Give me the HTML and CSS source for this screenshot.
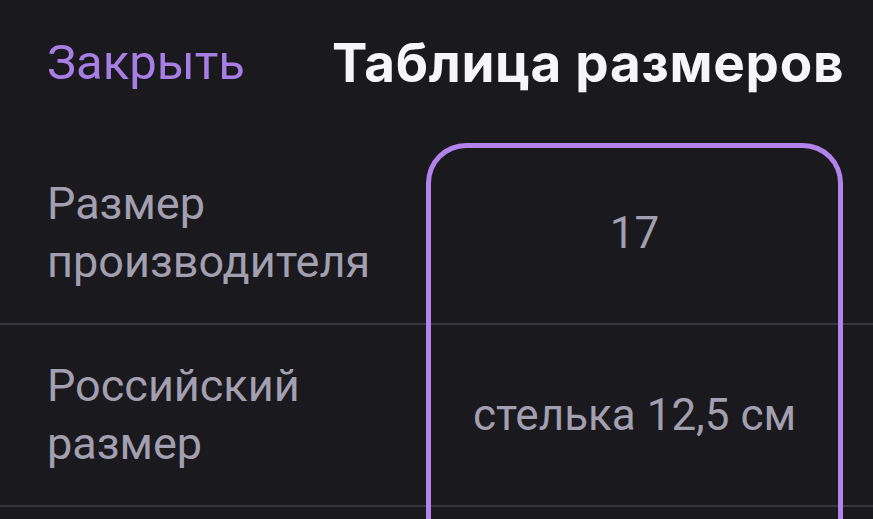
FILE: index.html
```html
<!DOCTYPE html>
<html lang="ru">
<head>
<meta charset="utf-8">
<link rel="stylesheet" href="styles.css">
</head>
<body>
<div class="screen">
  <header class="header">
    <span class="close">Закрыть</span>
    <h1 class="title">Таблица размеров</h1>
  </header>
  <div class="table">
    <div class="row">
      <div class="label">Размер<br>производителя</div>
      <div class="value">17</div>
    </div>
    <div class="row">
      <div class="label">Российский<br>размер</div>
      <div class="value">стелька 12,5 см</div>
    </div>
    <div class="frame"></div>
  </div>
</div>
</body>
</html>
```
FILE: styles.css
```css
html, body {
  margin: 0;
  padding: 0;
  background: #1a191e;
}
.screen {
  width: 873px;
  height: 519px;
  overflow: hidden;
  background: #1a191e;
  font-family: Roboto, "Liberation Sans", sans-serif;
}
.header {
  height: 143px;
  display: flex;
  align-items: center;
  padding-left: 47px;
  gap: 87px;
  box-sizing: border-box;
  padding-bottom: 18px;
}
.close {
  color: #a87ee4;
  font-size: 49px;
  font-weight: 400;
}
.title {
  margin: 0;
  color: #f6f5f8;
  font-family: Inter, "Open Sans", sans-serif;
  font-weight: 700;
  font-size: 53px;
  letter-spacing: 0.7px;
}
.table {
  position: relative;
}
.row {
  display: grid;
  grid-template-columns: 426px 417px;
  height: 180px;
  border-bottom: 2px solid #37363c;
  align-items: center;
}
.label {
  padding-left: 47px;
  color: #a29fb0;
  font-size: 45px;
  line-height: 58px;
}
.value {
  text-align: center;
  color: #a29fb0;
  font-size: 44px;
}
.frame {
  position: absolute;
  top: 0;
  left: 426px;
  width: 417px;
  height: 420px;
  box-sizing: border-box;
  border: 5px solid #b283ea;
  border-bottom: none;
  border-radius: 40px 40px 0 0;
  pointer-events: none;
}
```
